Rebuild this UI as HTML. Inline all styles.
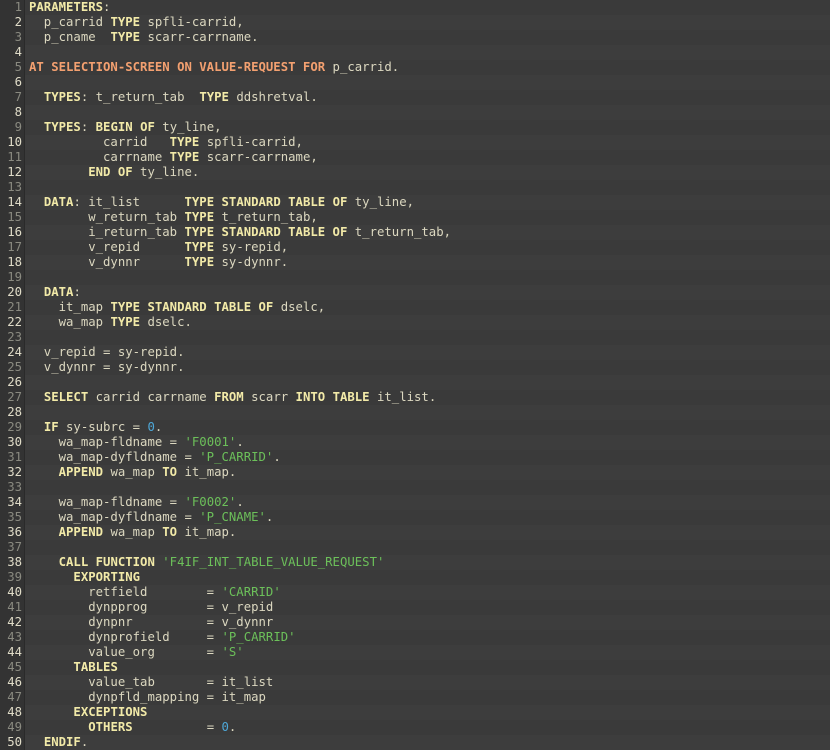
<!DOCTYPE html>
<html><head><style>
body{margin:0;background:#3b3b3b;width:830px;height:749px;overflow:hidden;font-family:"DejaVu Sans Mono","Liberation Mono",monospace;font-size:12.3px}
.r{height:15px;line-height:15px;white-space:pre;display:flex}
.r:nth-child(odd){background:#3a3a3a}
.r:nth-child(even){background:#3d3d3d}
.n{width:22px;text-align:right;padding-right:2px;color:#8a8a80;background:#333;border-right:1px solid #2a2a2a;flex:none}
.r:nth-child(even) .n{color:#e0dcc8}
.c{padding-left:4px;color:#dcd8c0}
b{color:#f2eaa8}
.o{color:#f3a070;font-weight:bold}
.s{color:#6cc05a}
.d{color:#4ea8d8}
</style></head><body>
<div class="r"><span class="n">1</span><span class="c"><b>PARAMETERS</b>:</span></div>
<div class="r"><span class="n">2</span><span class="c">  p_carrid <b>TYPE</b> spfli-carrid,</span></div>
<div class="r"><span class="n">3</span><span class="c">  p_cname  <b>TYPE</b> scarr-carrname.</span></div>
<div class="r"><span class="n">4</span><span class="c"></span></div>
<div class="r"><span class="n">5</span><span class="c"><span class="o">AT SELECTION-SCREEN ON VALUE-REQUEST FOR</span> p_carrid.</span></div>
<div class="r"><span class="n">6</span><span class="c"></span></div>
<div class="r"><span class="n">7</span><span class="c">  <b>TYPES</b>: t_return_tab  <b>TYPE</b> ddshretval.</span></div>
<div class="r"><span class="n">8</span><span class="c"></span></div>
<div class="r"><span class="n">9</span><span class="c">  <b>TYPES</b>: <b>BEGIN OF</b> ty_line,</span></div>
<div class="r"><span class="n">10</span><span class="c">          carrid   <b>TYPE</b> spfli-carrid,</span></div>
<div class="r"><span class="n">11</span><span class="c">          carrname <b>TYPE</b> scarr-carrname,</span></div>
<div class="r"><span class="n">12</span><span class="c">        <b>END OF</b> ty_line.</span></div>
<div class="r"><span class="n">13</span><span class="c"></span></div>
<div class="r"><span class="n">14</span><span class="c">  <b>DATA</b>: it_list      <b>TYPE STANDARD TABLE OF</b> ty_line,</span></div>
<div class="r"><span class="n">15</span><span class="c">        w_return_tab <b>TYPE</b> t_return_tab,</span></div>
<div class="r"><span class="n">16</span><span class="c">        i_return_tab <b>TYPE STANDARD TABLE OF</b> t_return_tab,</span></div>
<div class="r"><span class="n">17</span><span class="c">        v_repid      <b>TYPE</b> sy-repid,</span></div>
<div class="r"><span class="n">18</span><span class="c">        v_dynnr      <b>TYPE</b> sy-dynnr.</span></div>
<div class="r"><span class="n">19</span><span class="c"></span></div>
<div class="r"><span class="n">20</span><span class="c">  <b>DATA</b>:</span></div>
<div class="r"><span class="n">21</span><span class="c">    it_map <b>TYPE STANDARD TABLE OF</b> dselc,</span></div>
<div class="r"><span class="n">22</span><span class="c">    wa_map <b>TYPE</b> dselc.</span></div>
<div class="r"><span class="n">23</span><span class="c"></span></div>
<div class="r"><span class="n">24</span><span class="c">  v_repid = sy-repid.</span></div>
<div class="r"><span class="n">25</span><span class="c">  v_dynnr = sy-dynnr.</span></div>
<div class="r"><span class="n">26</span><span class="c"></span></div>
<div class="r"><span class="n">27</span><span class="c">  <b>SELECT</b> carrid carrname <b>FROM</b> scarr <b>INTO TABLE</b> it_list.</span></div>
<div class="r"><span class="n">28</span><span class="c"></span></div>
<div class="r"><span class="n">29</span><span class="c">  <b>IF</b> sy-subrc = <span class="d">0</span>.</span></div>
<div class="r"><span class="n">30</span><span class="c">    wa_map-fldname = <span class="s">'F0001'</span>.</span></div>
<div class="r"><span class="n">31</span><span class="c">    wa_map-dyfldname = <span class="s">'P_CARRID'</span>.</span></div>
<div class="r"><span class="n">32</span><span class="c">    <b>APPEND</b> wa_map <b>TO</b> it_map.</span></div>
<div class="r"><span class="n">33</span><span class="c"></span></div>
<div class="r"><span class="n">34</span><span class="c">    wa_map-fldname = <span class="s">'F0002'</span>.</span></div>
<div class="r"><span class="n">35</span><span class="c">    wa_map-dyfldname = <span class="s">'P_CNAME'</span>.</span></div>
<div class="r"><span class="n">36</span><span class="c">    <b>APPEND</b> wa_map <b>TO</b> it_map.</span></div>
<div class="r"><span class="n">37</span><span class="c"></span></div>
<div class="r"><span class="n">38</span><span class="c">    <b>CALL FUNCTION</b> <span class="s">'F4IF_INT_TABLE_VALUE_REQUEST'</span></span></div>
<div class="r"><span class="n">39</span><span class="c">      <b>EXPORTING</b></span></div>
<div class="r"><span class="n">40</span><span class="c">        retfield        = <span class="s">'CARRID'</span></span></div>
<div class="r"><span class="n">41</span><span class="c">        dynpprog        = v_repid</span></div>
<div class="r"><span class="n">42</span><span class="c">        dynpnr          = v_dynnr</span></div>
<div class="r"><span class="n">43</span><span class="c">        dynprofield     = <span class="s">'P_CARRID'</span></span></div>
<div class="r"><span class="n">44</span><span class="c">        value_org       = <span class="s">'S'</span></span></div>
<div class="r"><span class="n">45</span><span class="c">      <b>TABLES</b></span></div>
<div class="r"><span class="n">46</span><span class="c">        value_tab       = it_list</span></div>
<div class="r"><span class="n">47</span><span class="c">        dynpfld_mapping = it_map</span></div>
<div class="r"><span class="n">48</span><span class="c">      <b>EXCEPTIONS</b></span></div>
<div class="r"><span class="n">49</span><span class="c">        <b>OTHERS</b>          = <span class="d">0</span>.</span></div>
<div class="r"><span class="n">50</span><span class="c">  <b>ENDIF</b>.</span></div>
</body></html>
